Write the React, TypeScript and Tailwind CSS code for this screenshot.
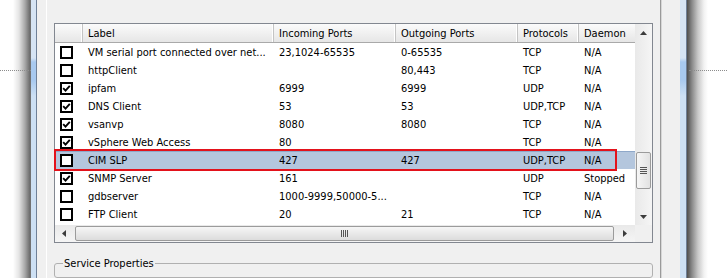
import React from "react";

type Row = { c: boolean; label: string; inc: string; out: string; proto: string; d: string; sel?: boolean };

const rows: Row[] = [
  { c: false, label: "VM serial port connected over net...", inc: "23,1024-65535", out: "0-65535", proto: "TCP", d: "N/A" },
  { c: false, label: "httpClient", inc: "", out: "80,443", proto: "TCP", d: "N/A" },
  { c: true, label: "ipfam", inc: "6999", out: "6999", proto: "UDP", d: "N/A" },
  { c: true, label: "DNS Client", inc: "53", out: "53", proto: "UDP,TCP", d: "N/A" },
  { c: true, label: "vsanvp", inc: "8080", out: "8080", proto: "TCP", d: "N/A" },
  { c: true, label: "vSphere Web Access", inc: "80", out: "", proto: "TCP", d: "N/A" },
  { c: false, label: "CIM SLP", inc: "427", out: "427", proto: "UDP,TCP", d: "N/A", sel: true },
  { c: true, label: "SNMP Server", inc: "161", out: "", proto: "UDP", d: "Stopped" },
  { c: false, label: "gdbserver", inc: "1000-9999,50000-5...", out: "", proto: "TCP", d: "N/A" },
  { c: false, label: "FTP Client", inc: "20", out: "21", proto: "TCP", d: "N/A" },
];

function Check({ checked }: { checked: boolean }) {
  return (
    <div className="w-[13px] h-[13px] border-2 border-black bg-white flex items-center justify-center">
      {checked && (
        <svg width="9" height="9" viewBox="0 0 9 9">
          <path d="M1.2 4.2 L3.5 6.6 L7.8 1.8" stroke="#000" strokeWidth="1.9" fill="none" />
        </svg>
      )}
    </div>
  );
}

function TriUp() {
  return (
    <svg width="7" height="4" viewBox="0 0 7 4">
      <polygon points="3.5,0 7,4 0,4" fill="#3c3c3c" />
    </svg>
  );
}
function TriDown() {
  return (
    <svg width="7" height="4" viewBox="0 0 7 4">
      <polygon points="0,0 7,0 3.5,4" fill="#3c3c3c" />
    </svg>
  );
}
function TriLeft() {
  return (
    <svg width="4" height="7" viewBox="0 0 4 7">
      <polygon points="4,0 4,7 0,3.5" fill="#3c3c3c" />
    </svg>
  );
}
function TriRight() {
  return (
    <svg width="4" height="7" viewBox="0 0 4 7">
      <polygon points="0,0 4,3.5 0,7" fill="#3c3c3c" />
    </svg>
  );
}

function HeaderCell({ w, children, last }: { w: string; children?: React.ReactNode; last?: boolean }) {
  return (
    <div className={`${w} h-full flex items-center pl-[5px] pt-[1px] ${last ? "" : "border-r border-[#c4c4c4] shadow-[inset_-1px_0_0_#ffffff]"}`}>
      {children}
    </div>
  );
}

export default function App() {
  return (
    <div className="w-[727px] h-[278px] bg-white flex overflow-hidden text-[11px] text-black font-['DejaVu_Sans_Condensed','Liberation_Sans',sans-serif]">
      {/* left page + shadow */}
      <div className="w-[31px] h-full bg-[linear-gradient(to_right,#ffffff_0px,#ffffff_13px,#e4e4e4_19px,#a8a8a8_25px,#6a6a6a_30px,#7a7a7a_31px)]">
        <div className="mt-[70px] border-t border-dotted border-[#8c8c8c]" />
      </div>
      {/* left blue frame */}
      <div className="w-[5px] h-full bg-[linear-gradient(to_bottom,#d6e4f4_0px,#d6e4f4_58px,#a8c9ef_62px,#a8c9ef_80px,#cde0f4_96px,#cde0f4_100%)]" />
      <div className="w-[1px] h-full bg-[#6f8098]" />

      {/* window interior */}
      <div className="w-[643px] h-full bg-[#f0f0f0] flex">
        <div className="w-[9px]" />
        <div className="w-[1px] h-full bg-white" />
        <div className="w-[613px] h-full flex flex-col pt-[23px] px-[7px]">
          {/* list box */}
          <div className="relative w-[599px] h-[220px] border border-[#828790] bg-white flex flex-col">
            <div className="flex h-[201px]">
              <div className="w-[580px] flex flex-col">
                {/* header */}
                <div className="h-[19px] flex border-b border-[#a9a9a9] bg-[linear-gradient(to_bottom,#fbfbfb,#e6e6e6)] leading-[17px]">
                  <HeaderCell w="w-[28px]" />
                  <HeaderCell w="w-[191px]">Label</HeaderCell>
                  <HeaderCell w="w-[122px]">Incoming Ports</HeaderCell>
                  <HeaderCell w="w-[122px]">Outgoing Ports</HeaderCell>
                  <HeaderCell w="w-[61px]">Protocols</HeaderCell>
                  <HeaderCell w="w-[56px]" last>Daemon</HeaderCell>
                </div>
                {/* rows */}
                <div className="h-[182px] overflow-hidden flex flex-col">
                  {rows.map((r, i) => (
                    <div
                      key={i}
                      className={`h-[18px] shrink-0 flex items-start leading-[18px] whitespace-nowrap ${r.sel ? "bg-[#b4c6dd] shadow-[inset_0_1px_0_#8fa8c9]" : ""}`}
                    >
                      <div className="w-[28px] pl-[5px] pt-[3px] flex">
                        <Check checked={r.c} />
                      </div>
                      <div className="w-[191px] pl-[5px] pt-[1px] overflow-hidden">{r.label}</div>
                      <div className="w-[122px] pl-[5px] pt-[1px] overflow-hidden">{r.inc}</div>
                      <div className="w-[122px] pl-[5px] pt-[1px] overflow-hidden">{r.out}</div>
                      <div className="w-[61px] pl-[5px] pt-[1px] overflow-hidden">{r.proto}</div>
                      <div className="w-[56px] pl-[5px] pt-[1px] overflow-hidden">{r.d}</div>
                    </div>
                  ))}
                </div>
              </div>
              {/* vertical scrollbar */}
              <div className="w-[17px] h-full flex flex-col bg-[linear-gradient(to_right,#e9e9e9,#f5f5f5)]">
                <div className="h-[17px] flex items-center justify-center">
                  <TriUp />
                </div>
                <div className="flex-1 pt-[111px] pl-[1px]">
                  <div className="w-[15px] h-[37px] rounded-[2px] border border-[#9b9b9b] bg-[linear-gradient(to_right,#f6f6f6,#e2e2e2)] flex flex-col items-center justify-center gap-[1px]">
                    <div className="w-[7px] h-[1px] bg-[#555]" />
                    <div className="w-[7px] h-[1px] bg-[#555]" />
                    <div className="w-[7px] h-[1px] bg-[#555]" />
                    <div className="w-[7px] h-[1px] bg-[#555]" />
                  </div>
                </div>
                <div className="h-[17px] flex items-center justify-center">
                  <TriDown />
                </div>
              </div>
            </div>
            {/* horizontal scrollbar */}
            <div className="flex h-[17px]">
              <div className="w-[580px] h-full flex bg-[linear-gradient(to_bottom,#e9e9e9,#f5f5f5)]">
                <div className="w-[17px] h-full flex items-center justify-center">
                  <TriLeft />
                </div>
                <div className="pl-[3px] pt-[1px]">
                  <div className="w-[539px] h-[15px] rounded-[2px] border border-[#9b9b9b] bg-[linear-gradient(to_bottom,#f6f6f6,#dcdcdc)] flex items-center justify-center gap-[1px]">
                    <div className="w-[1px] h-[7px] bg-[#555]" />
                    <div className="w-[1px] h-[7px] bg-[#555]" />
                    <div className="w-[1px] h-[7px] bg-[#555]" />
                    <div className="w-[1px] h-[7px] bg-[#555]" />
                  </div>
                </div>
                <div className="flex-1 h-full flex items-center justify-center">
                  <TriRight />
                </div>
              </div>
              <div className="w-[17px] h-full bg-[#f0f0f0]" />
            </div>
            {/* red annotation */}
            <div className="absolute left-[-1px] top-[125px] w-[563px] h-[22px] border-2 border-[#e3121b]" />
          </div>

          {/* group box */}
          <div className="mt-[20px] w-[599px] h-[40px] border border-[#b0b0b0] rounded-[3px]">
            <div className="-mt-[7px] ml-[8px] w-fit bg-[#f0f0f0] px-[1px] leading-[13px]">Service Properties</div>
          </div>
        </div>
        <div className="w-[1px] h-full bg-[#9a9a9a]" />
        <div className="w-[1px] h-full bg-[#d6d6d6]" />
        <div className="w-[18px]" />
      </div>

      {/* right blue frame */}
      <div className="w-[6px] h-full bg-[linear-gradient(to_bottom,#d6e4f4_0px,#d6e4f4_58px,#a8c9ef_62px,#a8c9ef_80px,#cde0f4_96px,#cde0f4_100%)]" />
      <div className="w-[1px] h-full bg-[#6f8098]" />
      {/* right shadow + page */}
      <div className="w-[40px] h-full bg-[linear-gradient(to_right,#4e4e4e_0px,#8a8a8a_5px,#c8c8c8_11px,#f2f2f2_17px,#ffffff_21px)]">
        <div className="mt-[70px] ml-[2px] border-t border-dotted border-[#8c8c8c]" />
      </div>
    </div>
  );
}
